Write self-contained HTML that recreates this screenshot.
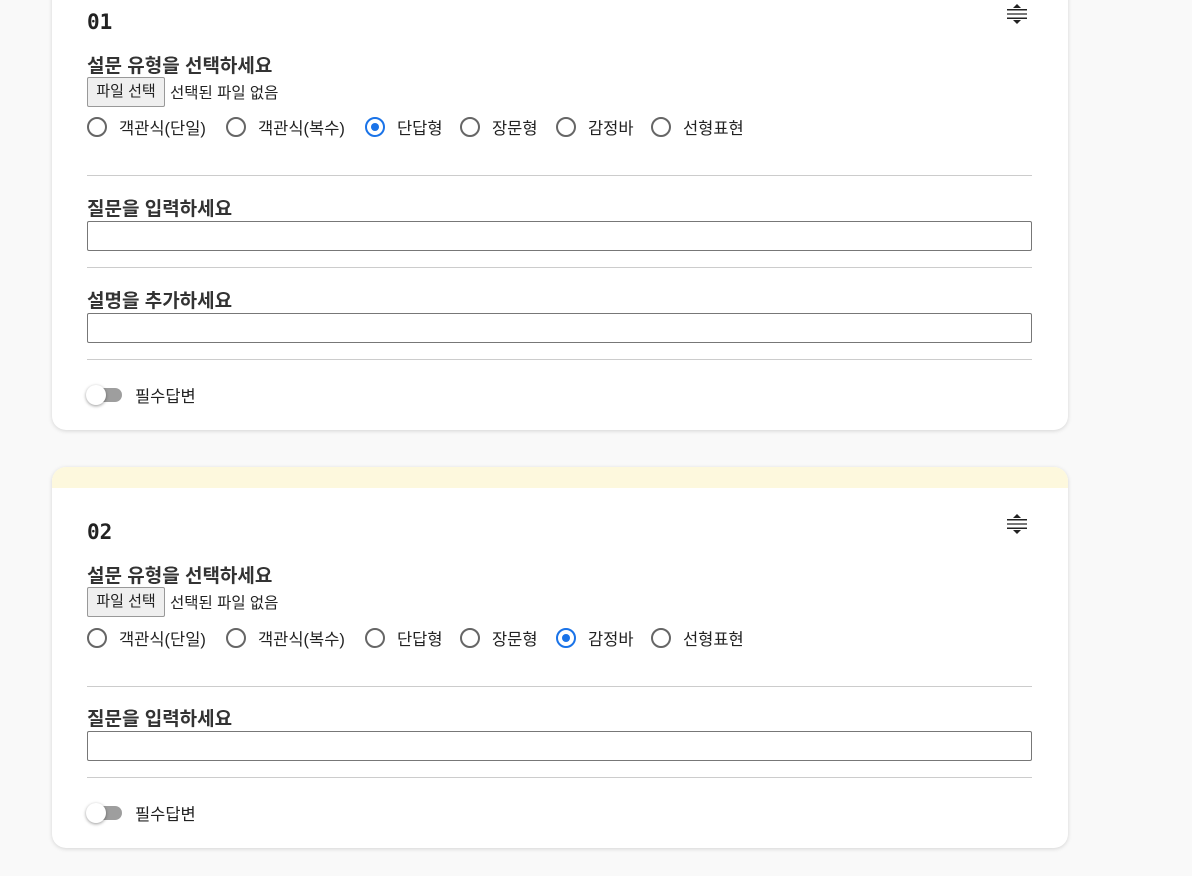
<!DOCTYPE html>
<html><head><meta charset="utf-8"><style>
body{margin:0;width:1192px;height:876px;background:#f9f9f9;font-family:"Liberation Sans","Noto Sans CJK KR",sans-serif;color:#222;position:relative;overflow:hidden}
.card{position:absolute;left:52px;width:1016px;background:#fff;border-radius:14px;box-shadow:0 1px 4px rgba(0,0,0,.15);overflow:hidden}
.a{position:absolute}
.num{font-family:"DejaVu Sans Mono","Liberation Mono",monospace;font-weight:bold;font-size:21px;color:#222}
.t{font-weight:bold;font-size:19px;color:#333}
.btn{border:1px solid #999;background:#efefef;border-radius:2px;font-size:15px;width:78px;text-align:center;height:30px;line-height:28px;box-sizing:border-box}
.f{font-size:15.5px}
.r{display:flex;align-items:center;font-size:16.5px;position:absolute}
.r span{display:inline-block;width:20px;height:20px;border:2px solid #666;border-radius:50%;margin-right:12px;box-sizing:border-box;position:relative;flex:none}
.r span.on{border-color:#1a73e8}
.r span.on:after{content:"";position:absolute;left:4px;top:4px;width:8px;height:8px;border-radius:50%;background:#1a73e8}
.r b{font-weight:normal;display:inline-block;white-space:nowrap}
.hr{position:absolute;left:35px;width:945px;height:1px;background:#ccc}
.in{position:absolute;left:35px;width:945px;height:30px;border:1px solid #777;border-radius:2px;box-sizing:border-box}
.tg{position:absolute;width:34px;height:14px;border-radius:7px;background:#9e9e9e}
.tg:after{content:"";position:absolute;left:-2px;top:-3px;width:20px;height:20px;border-radius:50%;background:#fff;box-shadow:0 1px 3px rgba(0,0,0,.4)}
.req{font-size:16.5px}
</style></head><body>
<div class="card" style="top:-20px;height:450px">
<svg class="a" style="left:954px;top:24px" width="22" height="20" viewBox="0 0 22 20"><path d="M7 4 L11 0 L15 4Z M7 16 L11 20 L15 16Z" fill="#222"/><rect x="1" y="5" width="20" height="1.5" fill="#222"/><rect x="1" y="9" width="20" height="2" fill="#777"/><rect x="1" y="13.5" width="20" height="1.5" fill="#222"/></svg>
<div class="a num" style="left:35px;top:30px">01</div>
<div class="a t" style="left:35px;top:71px">설문 유형을 선택하세요</div>
<div class="a btn" style="left:35px;top:97px">파일 선택</div>
<div class="a f" style="left:118px;top:101px">선택된 파일 없음</div>
<div class="r" style="left:35px;top:135px"><span></span><b style="width:107px">객관식(단일)</b><span></span><b style="width:107px">객관식(복수)</b><span class="on"></span><b style="width:63px">단답형</b><span></span><b style="width:64px">장문형</b><span></span><b style="width:63px">감정바</b><span></span><b>선형표현</b></div>
<div class="hr" style="top:195px"></div>
<div class="a t" style="left:35px;top:214px">질문을 입력하세요</div>
<div class="in" style="top:241px"></div>
<div class="hr" style="top:287px"></div>
<div class="a t" style="left:35px;top:306px">설명을 추가하세요</div>
<div class="in" style="top:333px"></div>
<div class="hr" style="top:379px"></div>
<div class="tg" style="left:36px;top:408px"></div>
<div class="a req" style="left:83px;top:403px">필수답변</div>
</div>
<div class="card" style="top:467px;height:381px">
<div class="a" style="left:0;top:0;width:1016px;height:21px;background:#fdf8dd"></div>
<svg class="a" style="left:954px;top:47px" width="22" height="20" viewBox="0 0 22 20"><path d="M7 4 L11 0 L15 4Z M7 16 L11 20 L15 16Z" fill="#222"/><rect x="1" y="5" width="20" height="1.5" fill="#222"/><rect x="1" y="9" width="20" height="2" fill="#777"/><rect x="1" y="13.5" width="20" height="1.5" fill="#222"/></svg>
<div class="a num" style="left:35px;top:53px">02</div>
<div class="a t" style="left:35px;top:94px">설문 유형을 선택하세요</div>
<div class="a btn" style="left:35px;top:120px">파일 선택</div>
<div class="a f" style="left:118px;top:124px">선택된 파일 없음</div>
<div class="r" style="left:35px;top:159px"><span></span><b style="width:107px">객관식(단일)</b><span></span><b style="width:107px">객관식(복수)</b><span></span><b style="width:63px">단답형</b><span></span><b style="width:64px">장문형</b><span class="on"></span><b style="width:63px">감정바</b><span></span><b>선형표현</b></div>
<div class="hr" style="top:219px"></div>
<div class="a t" style="left:35px;top:237px">질문을 입력하세요</div>
<div class="in" style="top:264px"></div>
<div class="hr" style="top:310px"></div>
<div class="tg" style="left:36px;top:339px"></div>
<div class="a req" style="left:83px;top:334px">필수답변</div>
</div>
</body></html>
